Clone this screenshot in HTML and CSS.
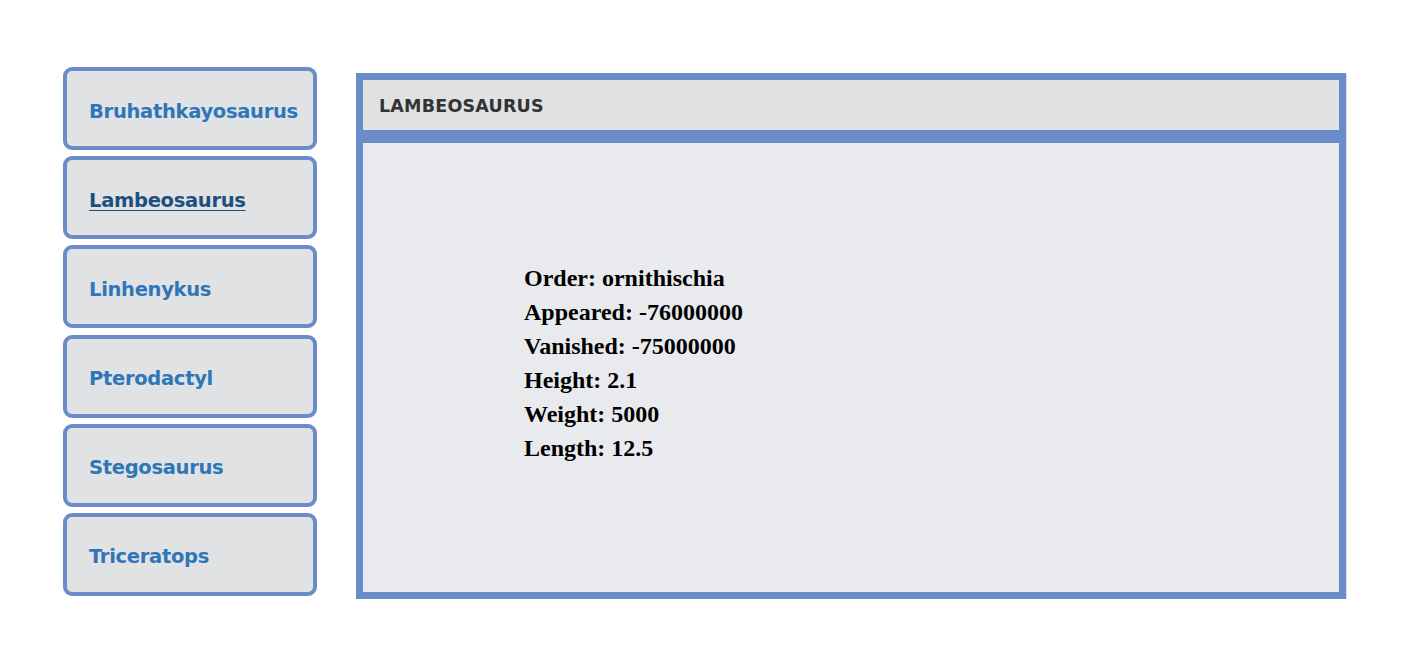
FILE: index.html
```html
<!DOCTYPE html>
<html>
<head>
<meta charset="utf-8">
<link rel="stylesheet" href="styles.css">
</head>
<body>
<div class="page">
  <nav class="sidebar">
    <a class="dino" href="#">Bruhathkayosaurus</a>
    <a class="dino active" href="#">Lambeosaurus</a>
    <a class="dino" href="#">Linhenykus</a>
    <a class="dino" href="#">Pterodactyl</a>
    <a class="dino" href="#">Stegosaurus</a>
    <a class="dino" href="#">Triceratops</a>
  </nav>
  <section class="panel">
    <header class="panel-head">LAMBEOSAURUS</header>
    <div class="panel-body">
      <div class="facts">
        <div>Order: ornithischia</div>
        <div>Appeared: -76000000</div>
        <div>Vanished: -75000000</div>
        <div>Height: 2.1</div>
        <div>Weight: 5000</div>
        <div>Length: 12.5</div>
      </div>
    </div>
  </section>
</div>
</body>
</html>
```
FILE: styles.css
```css
html, body {
  margin: 0;
  padding: 0;
  background: #ffffff;
}
.page {
  display: flex;
  align-items: flex-start;
  padding: 67px 0 0 63px;
  gap: 39px;
}
.sidebar {
  display: flex;
  flex-direction: column;
  gap: 6.2px;
  width: 254px;
}
.dino {
  box-sizing: border-box;
  height: 83px;
  display: flex;
  align-items: center;
  padding: 5px 0 0 22px;
  border: 4px solid #6a8dca;
  border-radius: 9px;
  background: #e1e2e4;
  color: #2f76b8;
  text-decoration: none;
  font-family: "Comic Sans MS", "DejaVu Sans", sans-serif;
  font-weight: bold;
  font-size: 19.5px;
  letter-spacing: -0.3px;
}
.dino.active {
  color: #1f4f7e;
  text-decoration: underline;
  text-underline-offset: 3px;
}
.panel {
  box-sizing: border-box;
  margin-top: 6px;
  width: 990px;
  height: 526px;
  border: 7px solid #6a8dca;
  display: flex;
  flex-direction: column;
  background: #6a8dca;
  gap: 13px;
  box-shadow: 1px 1px 1px rgba(0,0,0,0.12);
}
.panel-head {
  height: 50px;
  display: flex;
  align-items: center;
  padding: 2px 0 0 16px;
  box-sizing: border-box;
  background: #e0e1e3;
  color: #333333;
  font-family: "Comic Sans MS", "DejaVu Sans", sans-serif;
  font-weight: bold;
  font-size: 17.5px;
  letter-spacing: 0.2px;
}
.panel-body {
  flex: 1;
  background: #e9eaee;
  display: flex;
  align-items: center;
  padding-left: 161px;
}
.facts {
  font-family: "Liberation Serif", "Times New Roman", serif;
  font-weight: bold;
  font-size: 24px;
  line-height: 34px;
  color: #000000;
  margin-top: -10px;
}
```
